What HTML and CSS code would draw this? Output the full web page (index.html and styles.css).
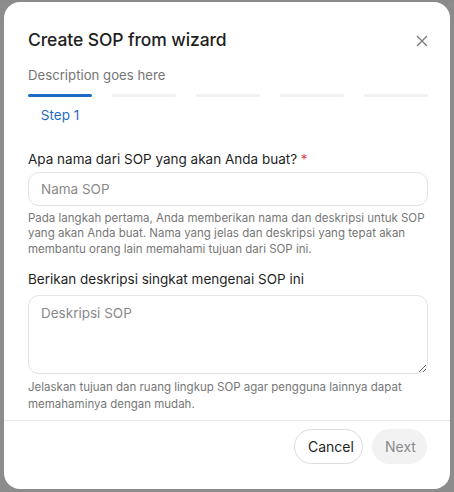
FILE: index.html
```html
<!DOCTYPE html>
<html lang="id">
<head>
<meta charset="utf-8">
<link rel="stylesheet" href="styles.css">
</head>
<body>
<div class="backdrop">
  <div class="bg-line"></div>
  <div class="modal">
    <div class="header">
      <h1 class="title">Create SOP from wizard</h1>
      <button class="close" aria-label="Close">
        <svg width="12" height="12" viewBox="0 0 12 12"><path d="M1 1L11 11M11 1L1 11" stroke="#7a7a7a" stroke-width="1.3" fill="none"/></svg>
      </button>
    </div>
    <p class="desc">Description goes here</p>
    <div class="steps">
      <div class="step active"><div class="bar"></div><span class="step-label">Step 1</span></div>
      <div class="step"><div class="bar"></div></div>
      <div class="step"><div class="bar"></div></div>
      <div class="step"><div class="bar"></div></div>
      <div class="step"><div class="bar"></div></div>
    </div>
    <div class="body">
      <div class="field">
        <label class="label">Apa nama dari SOP yang akan Anda buat? <span class="req">*</span></label>
        <input class="input" type="text" placeholder="Nama SOP">
        <p class="help h1">Pada langkah pertama, Anda memberikan nama dan deskripsi untuk SOP yang akan Anda buat. Nama yang jelas dan deskripsi yang tepat akan membantu orang lain memahami tujuan dari SOP ini.</p>
      </div>
      <div class="field">
        <label class="label">Berikan deskripsi singkat mengenai SOP ini</label>
        <textarea class="textarea" placeholder="Deskripsi SOP"></textarea>
        <p class="help h2">Jelaskan tujuan dan ruang lingkup SOP agar pengguna lainnya dapat memahaminya dengan mudah.</p>
      </div>
    </div>
    <div class="footer">
      <button class="btn cancel">Cancel</button>
      <button class="btn next" disabled>Next</button>
    </div>
  </div>
</div>
</body>
</html>
```

FILE: styles.css
```css
* { box-sizing: border-box; }
html, body { margin: 0; padding: 0; }
body {
  width: 454px;
  height: 492px;
  overflow: hidden;
  background: #8c8c8c;
  font-family: Inter, "Noto Sans", sans-serif;
}
.backdrop {
  position: relative;
  width: 454px;
  height: 492px;
  padding: 2px 4px 0 4px;
}
.bg-line {
  position: absolute;
  left: 0;
  top: 0;
  width: 454px;
  height: 2px;
  background: #8a8a8a;
}
.modal {
  position: relative;
  background: #fff;
  border-radius: 16px;
  width: 446px;
  height: 487px;
  display: flex;
  flex-direction: column;
}
.header {
  display: flex;
  justify-content: space-between;
  align-items: center;
  padding: 25px 22px 0 24px;
  height: 51px;
}
.title {
  margin: 0;
  font-size: 17.5px;
  font-weight: 500;
  color: #1f1f1f;
  line-height: 26px;
  letter-spacing: -0.1px;
}
.close {
  border: 0;
  background: none;
  padding: 0;
  width: 12px;
  height: 12px;
  display: flex;
  margin-top: 1px;
}
.desc {
  margin: 13px 24px 0 24px;
  font-size: 13.2px;
  line-height: 18px;
  color: #767676;
}
.steps {
  display: flex;
  gap: 20px;
  margin: 10px 24px 0 24px;
  height: 34px;
}
.step {
  width: 64px;
  display: flex;
  flex-direction: column;
  align-items: center;
}
.bar {
  width: 64px;
  height: 3px;
  border-radius: 2px;
  background: #f1f1f1;
}
.step.active .bar { background: #1c6cc6; }
.step-label {
  margin-top: 9px;
  font-size: 13.5px;
  color: #1c6cc6;
  line-height: 18px;
}
.body {
  padding: 0 24px;
  flex: 1;
}
.field { display: flex; flex-direction: column; }
.field + .field { margin-top: 13px; }
.body .field:first-child { margin-top: 21.5px; }
.label {
  font-size: 13.5px;
  line-height: 18px;
  color: #1f1f1f;
}
.req { color: #e5484d; }
.input, .textarea {
  width: 400px;
  border: 1px solid #e3e3e3;
  border-radius: 11px;
  font-family: Inter, "Noto Sans", sans-serif;
  font-size: 13.5px;
  color: #1f1f1f;
  background: #fff;
  outline: none;
}
.input {
  height: 34px;
  margin-top: 4px;
  padding: 0 12px;
}
.textarea {
  height: 79px;
  margin-top: 7px;
  padding: 9px 12px;
  resize: vertical;
}
.input::placeholder, .textarea::placeholder { color: #8a8a8a; }
.help {
  margin: 5px 0 0 0;
  font-size: 11.5px;
  color: #777;
}
.help.h1 { line-height: 15.5px; }
.help.h2 { line-height: 17px; margin-top: 5px; }
.footer {
  border-top: 1px solid #e8e8e8;
  display: flex;
  justify-content: flex-end;
  gap: 9px;
  padding: 8px 23px 0 0;
  height: 69px;
}
.btn {
  height: 35px;
  border-radius: 18px;
  font-family: Inter, "Noto Sans", sans-serif;
  font-size: 14px;
  padding: 0 13px;
}
.cancel {
  border: 1px solid #dcdcdc;
  background: #fff;
  color: #1f1f1f;
  width: 69px;
}
.next {
  border: 0;
  background: #f2f2f2;
  color: #8a8a8a;
  width: 55px;
}
```
